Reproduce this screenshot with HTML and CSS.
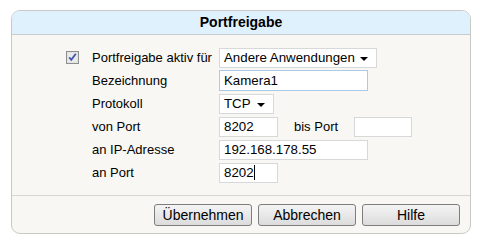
FILE: index.html
```html
<!DOCTYPE html>
<html lang="de">
<head>
<meta charset="utf-8">
<title>Portfreigabe</title>
<link rel="stylesheet" href="styles.css">
</head>
<body>
<div class="panel">
  <div class="header">Portfreigabe</div>
  <div class="form">
    <div class="row">
      <span class="check">
        <svg width="13" height="13" viewBox="0 0 13 13"><rect x="0.5" y="0.5" width="12" height="12" fill="#dcdcdc" stroke="#8f8f8f"/><rect x="1.5" y="1.5" width="10" height="10" fill="#eaeaea"/><path d="M3.2 6.4 L5.3 8.8 L9.8 2.8" fill="none" stroke="#3f57b0" stroke-width="1.8"/></svg>
      </span>
      <span class="label">Portfreigabe aktiv für</span>
      <div class="field select wide">Andere Anwendungen<span class="arrow"></span></div>
    </div>
    <div class="row">
      <span class="check"></span>
      <span class="label">Bezeichnung</span>
      <div class="field text name focus">Kamera1</div>
    </div>
    <div class="row">
      <span class="check"></span>
      <span class="label">Protokoll</span>
      <div class="field select small">TCP<span class="arrow"></span></div>
    </div>
    <div class="row">
      <span class="check"></span>
      <span class="label">von Port</span>
      <div class="field text port">8202</div>
      <span class="bis">bis Port</span>
      <div class="field text port2"></div>
    </div>
    <div class="row">
      <span class="check"></span>
      <span class="label">an IP-Adresse</span>
      <div class="field text name">192.168.178.55</div>
    </div>
    <div class="row">
      <span class="check"></span>
      <span class="label">an Port</span>
      <div class="field text port">8202<span class="caret"></span></div>
    </div>
  </div>
  <div class="footer">
    <button class="btn">Übernehmen</button>
    <button class="btn">Abbrechen</button>
    <button class="btn">Hilfe</button>
  </div>
</div>
</body>
</html>
```
FILE: styles.css
```css
html, body {
  margin: 0;
  padding: 0;
  background: #ffffff;
}
body {
  font-family: "Liberation Sans", Arial, sans-serif;
  font-size: 13px;
  color: #000;
}
.panel {
  margin: 10px 0 0 11px;
  width: 458px;
  border: 1px solid #c9c9c6;
  border-radius: 9px;
  background: #f8f7f3;
  overflow: hidden;
}
.header {
  height: 23px;
  line-height: 23px;
  background: #dff1fc;
  border-bottom: 1px solid #c9cccd;
  text-align: center;
  font-weight: bold;
  font-size: 14px;
}
.form {
  padding: 11px 0 11px 54px;
  display: flex;
  flex-direction: column;
}
.row {
  height: 23px;
  display: flex;
  align-items: center;
  white-space: nowrap;
}
.check {
  width: 26px;
  height: 13px;
  display: flex;
  flex: none;
}
.label {
  width: 127px;
  flex: none;
}
.field {
  box-sizing: border-box;
  height: 20px;
  background: #fff;
  border: 1px solid #d6d8da;
  padding: 0 4px;
  line-height: 18px;
  display: flex;
  align-items: center;
  position: relative;
  flex: none;
  font-size: 13.3px;
}
.field.focus {
  border-color: #aacae6;
  height: 21px;
}
.select.wide { width: 158px; }
.select.small { width: 55px; }
.name { width: 149px; }
.port { width: 59px; }
.port2 { width: 58px; }
.bis {
  margin: 0 16px;
  width: 44px;
  flex: none;
}
.arrow {
  position: absolute;
  right: 8px;
  top: 8px;
  width: 0;
  height: 0;
  border-left: 4px solid transparent;
  border-right: 4px solid transparent;
  border-top: 4px solid #000;
}
.caret {
  display: inline-block;
  width: 1px;
  height: 15px;
  background: #000;
}
.footer {
  border-top: 1px solid #d6d5d1;
  padding: 8px 10px 7px 0;
  display: flex;
  justify-content: flex-end;
  gap: 6px;
}
.btn {
  box-sizing: border-box;
  width: 98px;
  height: 22px;
  padding: 0;
  font-family: "Liberation Sans", Arial, sans-serif;
  font-size: 14px;
  color: #000;
  border: 1px solid #7d7d7d;
  border-radius: 3px;
  background: linear-gradient(#f4f4f4, #dcdcdc);
}
```
